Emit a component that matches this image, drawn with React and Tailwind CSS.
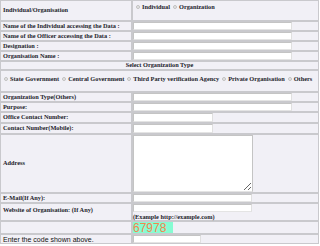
import React from "react";

const serif = { fontFamily: '"Liberation Serif", "Times New Roman", serif' };

function Radio({ label }) {
  return (
    <span className="inline-flex items-center gap-[2px] mr-[3px]">
      <span className="inline-block w-[4px] h-[4px] rounded-full border border-[#c0c0c0] bg-[#e8e8e8]"></span>
      <span>{label}</span>
    </span>
  );
}

function Input({ w, h = "h-full" }) {
  return (
    <div className={`${w} ${h} bg-white border border-[#c4c4c4] border-b-[#e4e4e4] border-r-[#e0e0e0]`}></div>
  );
}

function Row({ label, h, children, labelClass = "items-center" }) {
  return (
    <div className={`flex gap-[2px] ${h}`}>
      <div className={`w-[130px] bg-[#f1f0f6] flex ${labelClass} pl-[2px] shrink-0 whitespace-nowrap`}>{label}</div>
      <div className="flex-1 bg-[#f1f0f6] flex">{children}</div>
    </div>
  );
}

export default function App() {
  return (
    <div className="w-[320px] h-[246px] bg-white overflow-hidden">
      <div
        className="w-[319px] bg-[#c9c9cd] flex flex-col gap-[2px] p-[1px] text-[6.3px] leading-none font-bold text-[#1c1c2a]"
        style={serif}
      >
        <Row label="Individual/Organisation" h="h-[19px]">
          <div className="flex items-start pt-[3px] pl-[3px]">
            <Radio label="Individual" />
            <Radio label="Organization" />
          </div>
        </Row>
        <Row label="Name of the Individual accessing the Data :" h="h-[8px]">
          <Input w="w-[159px]" />
        </Row>
        <Row label="Name of the Officer accessing the Data :" h="h-[8px]">
          <Input w="w-[159px]" />
        </Row>
        <Row label="Designation :" h="h-[8px]">
          <Input w="w-[159px]" />
        </Row>
        <Row label="Organisation Name :" h="h-[8px]">
          <Input w="w-[159px]" />
        </Row>
        <div className="h-[7px] bg-[#f1f0f6] flex items-center justify-center">Select Organization Type</div>
        <div className="h-[20px] bg-[#f1f0f6] flex items-start pt-[5px] pl-[3px] whitespace-nowrap">
          <Radio label="State Government" />
          <Radio label="Central Government" />
          <Radio label="Third Party verification Agency" />
          <Radio label="Private Organisation" />
          <Radio label="Others" />
        </div>
        <Row label="Organization Type(Others)" h="h-[8px]">
          <Input w="w-[159px]" />
        </Row>
        <Row label="Purpose:" h="h-[8px]">
          <Input w="w-[159px]" />
        </Row>
        <Row label="Office Contact Number:" h="h-[9px]">
          <Input w="w-[80px]" />
        </Row>
        <Row label="Contact Number(Mobile):" h="h-[9px]">
          <Input w="w-[80px]" />
        </Row>
        <Row label="Address" h="h-[57px]">
          <textarea
            className="w-[120px] h-full bg-white border border-[#c4c4c4] border-b-[#e4e4e4] resize p-0 m-0 block"
            readOnly
          ></textarea>
        </Row>
        <Row label="E-Mail(If Any):" h="h-[8px]">
          <Input w="w-[119px]" />
        </Row>
        <Row label="Website of Organisation: (If Any)" h="h-[16px]" labelClass="items-start pt-[3px]">
          <div className="flex flex-col">
            <Input w="w-[119px]" h="h-[8px]" />
            <div className="mt-[2px] whitespace-nowrap">(Example http://example.com)</div>
          </div>
        </Row>
        <Row label="" h="h-[11px]">
          <div
            className="w-[40px] h-full bg-[#86fcd2] text-[#f5844e] text-[12px] font-normal leading-none flex items-center"
            style={{ fontFamily: '"Liberation Sans", Arial, sans-serif' }}
          >
            67978
          </div>
        </Row>
        <div className="flex gap-[2px] h-[8px]">
          <div
            className="w-[130px] bg-[#f1f0f6] flex items-center pl-[2px] shrink-0 font-normal text-[7px] text-[#111] whitespace-nowrap"
            style={{ fontFamily: '"Liberation Sans", Arial, sans-serif' }}
          >
            Enter the code shown above.
          </div>
          <div className="flex-1 bg-[#f1f0f6] flex">
            <Input w="w-[68px]" />
          </div>
        </div>
      </div>
    </div>
  );
}
